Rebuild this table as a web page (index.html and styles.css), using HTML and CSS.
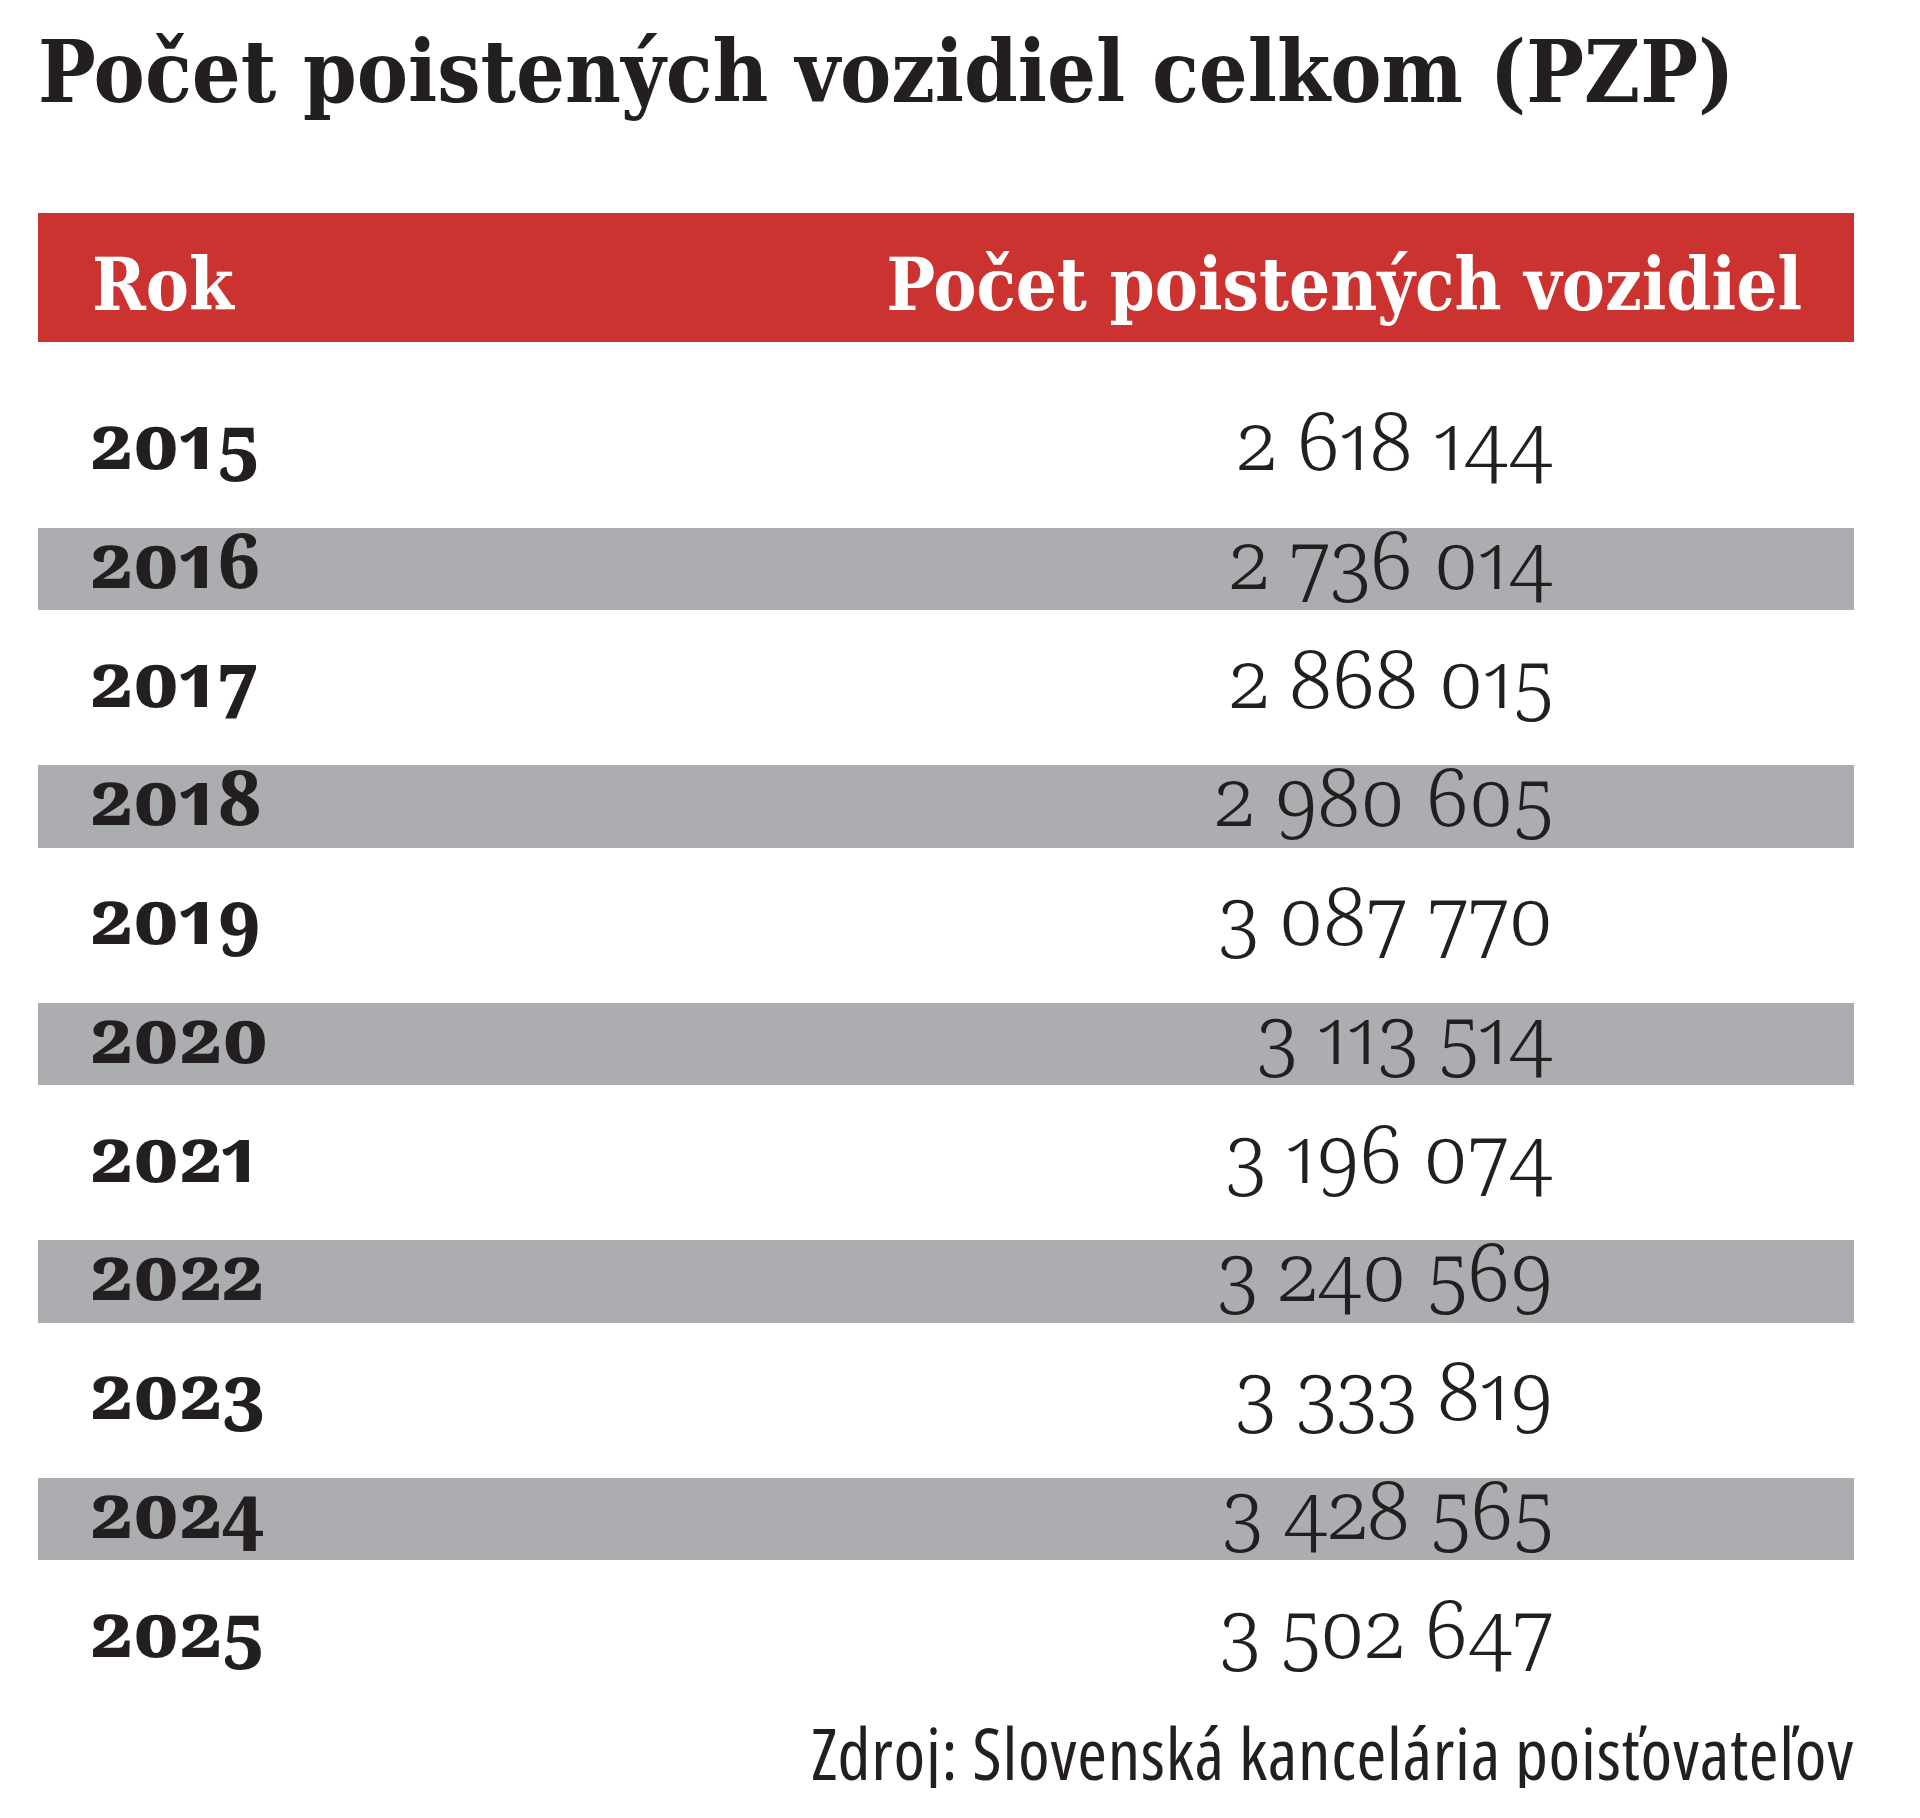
FILE: index.html
```html
<!DOCTYPE html>
<html lang="sk">
<head>
<meta charset="utf-8">
<title>Počet poistených vozidiel celkom (PZP)</title>
<link rel="stylesheet" href="styles.css">
</head>
<body>
<main class="page">
  <h1 class="title">Počet poistených vozidiel celkom (PZP)</h1>
  <div class="head">
    <span class="head-year">Rok</span>
    <span class="head-value">Počet poistených vozidiel</span>
  </div>
  <div class="rows">
    <div class="row"><span class="year">2015</span><span class="value">2 618 144</span></div>
    <div class="row alt"><span class="year">2016</span><span class="value">2 736 014</span></div>
    <div class="row"><span class="year">2017</span><span class="value">2 868 015</span></div>
    <div class="row alt"><span class="year">2018</span><span class="value">2 980 605</span></div>
    <div class="row"><span class="year">2019</span><span class="value">3 087 770</span></div>
    <div class="row alt"><span class="year">2020</span><span class="value">3 113 514</span></div>
    <div class="row"><span class="year">2021</span><span class="value">3 196 074</span></div>
    <div class="row alt"><span class="year">2022</span><span class="value">3 240 569</span></div>
    <div class="row"><span class="year">2023</span><span class="value">3 333 819</span></div>
    <div class="row alt"><span class="year">2024</span><span class="value">3 428 565</span></div>
    <div class="row"><span class="year">2025</span><span class="value">3 502 647</span></div>
  </div>
  <p class="source">Zdroj: Slovenská kancelária poisťovateľov</p>
</main>
</body>
</html>
```
FILE: styles.css
```css
html, body {
  margin: 0;
  padding: 0;
  background: #ffffff;
}

body {
  color: #231f20;
}

.page {
  width: 1816px;
  padding: 29px 0 0 38px;
}

.title {
  margin: 0;
  font-family: "DejaVu Serif Condensed", "DejaVu Serif", serif;
  font-stretch: condensed;
  font-weight: 700;
  font-size: 85.5px;
  line-height: 86px;
  white-space: nowrap;
}

.head {
  margin-top: 98px;
  height: 129px;
  box-sizing: border-box;
  padding: 15px 52px 0 54px;
  background: #cc3330;
  color: #ffffff;
  display: flex;
  justify-content: space-between;
  font-family: "DejaVu Serif Condensed", "DejaVu Serif", serif;
  font-stretch: condensed;
  font-weight: 700;
  font-size: 72px;
  line-height: 114px;
  white-space: nowrap;
}

.rows {
  margin-top: 67px;
  display: grid;
  row-gap: 36.25px;
}

.row {
  height: 82.5px;
  display: flex;
  justify-content: space-between;
  align-items: flex-start;
  padding: 0 301px 0 53px;
}

.row.alt {
  background: #acadb0;
}

.year {
  font-family: "Noto Serif", "DejaVu Serif", serif;
  font-weight: 800;
  font-size: 75px;
  line-height: 63px;
  letter-spacing: 1px;
  font-variant-numeric: oldstyle-nums proportional-nums;
}

.value {
  font-family: "Noto Serif", "DejaVu Serif", serif;
  font-weight: 300;
  font-size: 80px;
  line-height: 60px;
  font-variant-numeric: oldstyle-nums proportional-nums;
  white-space: nowrap;
}

.source {
  margin: 37px 0 0;
  text-align: right;
  font-family: "Open Sans", "DejaVu Sans", sans-serif;
  font-stretch: 75%;
  font-weight: 400;
  font-size: 72px;
  line-height: 72px;
  letter-spacing: 0.7px;
}
```
